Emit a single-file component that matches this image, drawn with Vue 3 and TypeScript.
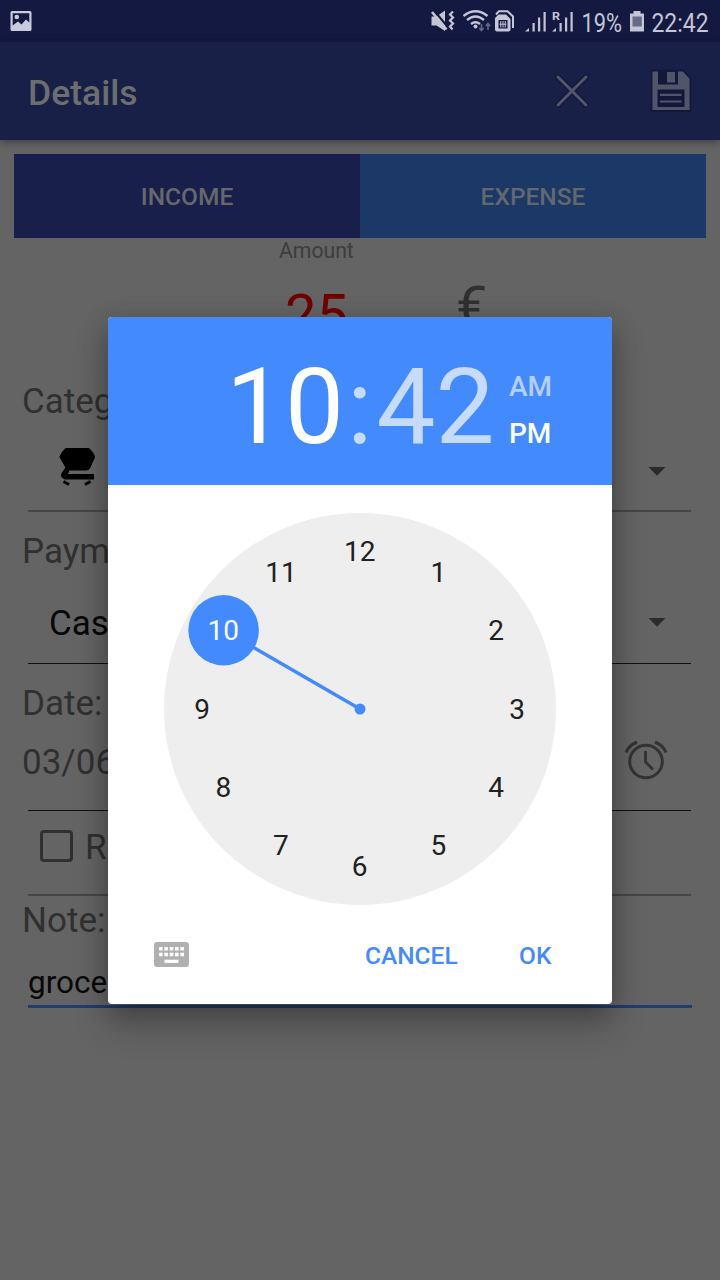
<script setup lang="ts">
interface Mark {
  label: string
  x: number
  y: number
  selected: boolean
}

const selectedHour = 10
const centre = 196
const markRadius = 157.5

const marks: Mark[] = Array.from({ length: 12 }, (_, i) => {
  const hour = i + 1
  const angle = (hour * Math.PI) / 6
  return {
    label: String(hour),
    x: centre + markRadius * Math.sin(angle),
    y: centre - markRadius * Math.cos(angle),
    selected: hour === selectedHour,
  }
})
const hand = marks.find((m) => m.selected)!
</script>

<template>
  <div class="screen">
    <header class="status">
      <svg class="picture" width="22" height="22" viewBox="0 0 22 22">
        <path fill="#c9cbdd" fill-rule="evenodd" d="M2 0H20Q21.500 0 21.500 1.500V18.500Q21.500 20 20 20H2Q.5 20 .5 18.500V1.500Q.5 0 2 0ZM2.700 2.300V14.500L8 10.500L11.500 13.500L16 8.500L19.300 11.500V2.300Z" />
        <circle cx="6.800" cy="6" r="2.300" fill="#c9cbdd" />
      </svg>
      <svg class="indicators" width="290" height="42" viewBox="430 0 290 42">
        <g fill="#c4c6d6">
          <path d="M431.500 16.500H436.500L445 10.500V31L436.500 25.500H431.500Z" />
          <path d="M434 10.500L449 28.500" fill="none" stroke="#131940" stroke-width="2" />
          <path d="M432 12L446.500 29.500" fill="none" stroke="#c4c6d6" stroke-width="2.600" />
          <path d="M453 11.500L450 14.500L453 17.500L450 20.500L453 23.500L450 26.500L452.500 29.500" fill="none" stroke="#c4c6d6" stroke-width="2.200" />
          <g fill="none" stroke="#c4c6d6" stroke-width="2.300">
            <path d="M463.500 16Q475.500 6.500 487.500 16" />
            <path d="M467 20Q475.500 13 484 20" />
            <path d="M471 24Q475.500 20.500 480 24" />
          </g>
          <circle cx="475.500" cy="26.500" r="2" />
          <path d="M481.500 24V30M479.300 28L481.500 30.500L483.700 28M488 30V24M485.800 26L488 23.500L490.200 26" fill="none" stroke="#63678a" stroke-width="1.600" />
          <path fill-rule="evenodd" d="M498.500 14.500H506L510.500 19V29.500Q510.500 31.500 508.500 31.500H497Q495 31.500 495 29.500V18ZM498.500 20V28.500H507.500V20Z" />
          <path d="M496 14.500L499 11.200H507.500L513 16.500V28" fill="none" stroke="#c4c6d6" stroke-width="2" />
          <path d="M500.800 21V27.500M503 21V27.500M505.200 21V27.500M499.500 24.200H506.500" fill="none" stroke="#c4c6d6" stroke-width="1" />
          <path d="M525 31.500L529 28V31.500ZM532.500 23H534.700V31.500H532.500ZM538 17.500H540.200V31.500H538ZM543.500 12H545.700V31.500H543.500Z" />
          <path d="M552 31.500L556 28V31.500ZM559.500 23H561.700V31.500H559.500ZM565 17.500H567.200V31.500H565ZM570.500 12H572.700V31.500H570.500Z" />
          <text x="552" y="20" font-size="11.500" font-weight="700" textLength="8" lengthAdjust="spacingAndGlyphs">R</text>
          <text x="581.500" y="31.500" font-size="26" textLength="40.500" lengthAdjust="spacingAndGlyphs">19%</text>
          <path d="M633.500 11H640.500V13.500H644V31.500H630V13.500H633.500Z" />
          <path d="M632.500 16.500H641.800V26.500H632.500Z" fill="#666b88" />
          <text x="651.500" y="31.500" font-size="26" textLength="57" lengthAdjust="spacingAndGlyphs">22:42</text>
        </g>
      </svg>
    </header>

    <nav class="appbar">
      <h1>Details</h1>
      <svg class="close" width="40" height="40" viewBox="0 0 40 40" fill="none" stroke-linecap="round">
        <path d="M6 6L34 34M34 6L6 34" stroke="#12183a" stroke-width="5.500" />
        <path d="M6 6L34 34M34 6L6 34" stroke="#535669" stroke-width="3" />
      </svg>
      <svg class="save" width="42" height="44" viewBox="0 0 42 44">
        <path d="M1.500 3Q1.500 1.500 3 1.500H33L40.500 9.500V40.500Q40.500 42 39 42H3Q1.500 42 1.500 40.500Z" fill="#51556a" stroke="#12183a" stroke-width="1.800" />
        <path d="M8 1.500H28V15.500H8Z" fill="#12183a" />
        <path d="M17 3H25V13.500H17Z" fill="#51556a" />
        <path d="M7.500 20.500H34.500V38H7.500Z" fill="#12183a" />
        <path d="M10 25.800H31.500M10 32.500H31.500" stroke="#51556a" stroke-width="2.200" />
      </svg>
    </nav>

    <main>
      <div class="tabs">
        <div class="tab income">INCOME</div>
        <div class="tab expense">EXPENSE</div>
      </div>
      <div class="amount-label">Amount</div>
      <div class="amount">
        <span class="value">25</span>
        <span class="currency">€</span>
      </div>

      <div class="label category">Category:</div>
      <div class="field spinner soft">
        <svg class="cart" width="38" height="40" viewBox="0 0 38 40">
          <path d="M7 .5H29.500Q34 4 35.500 9L30.500 20Q29.500 22 27 22H10L8 26.500H34.500V30.800H6Q1.500 29.500 3 25.500L7 19.500L1 9Q3 4 7 .5Z" fill="#000" stroke="#000" stroke-width="1.200" stroke-linejoin="round" />
          <path d="M4.500 33.500L10 36.500M31.500 33.500L26 36.500" stroke="#000" stroke-width="2.800" />
        </svg>
        <svg class="arrow" width="18" height="9" viewBox="0 0 18 9"><path d="M.5 0H17.500L9 8.700Z" fill="#2b2b2b" /></svg>
      </div>

      <div class="label payment">Payment:</div>
      <div class="field spinner">
        <span class="method">Cash</span>
        <svg class="arrow" width="18" height="9" viewBox="0 0 18 9"><path d="M.5 0H17.500L9 8.700Z" fill="#2b2b2b" /></svg>
      </div>

      <div class="label date">Date:</div>
      <div class="field datetime">
        <span>03/06/2018</span>
        <svg width="44" height="40" viewBox="0 0 44 40" fill="none" stroke="#333" stroke-width="3">
          <circle cx="22" cy="21.500" r="16.300" />
          <path d="M21.500 11V22L29 29.500" stroke-width="2.800" />
          <path d="M2 12.500Q5 5 13 2M42 12.500Q39 5 31 2" />
        </svg>
      </div>

      <div class="field repeat soft">
        <span class="box"></span>
        <span>Repeat</span>
      </div>

      <div class="label note">Note:</div>
      <div class="field entry">groceries</div>
    </main>

    <section class="dialog">
      <div class="head">
        <div class="time"><span class="hour">10</span><span class="colon">:</span><span>42</span></div>
        <div class="period">
          <span class="am">AM</span>
          <span>PM</span>
        </div>
      </div>
      <svg class="clock" width="392" height="392" viewBox="0 0 392 392">
        <circle :cx="centre" :cy="centre" r="196" fill="#eee" />
        <line :x1="centre" :y1="centre" :x2="hand.x" :y2="hand.y" stroke="#448aff" stroke-width="3.500" />
        <circle :cx="centre" :cy="centre" r="5.500" fill="#448aff" />
        <circle :cx="hand.x" :cy="hand.y" r="35.300" fill="#448aff" />
        <text
          v-for="m in marks"
          :key="m.label"
          :x="m.x - 0.3"
          :y="m.y + 9.600"
          :fill="m.selected ? '#fff' : '#212121'"
          font-size="28"
          text-anchor="middle"
        >{{ m.label }}</text>
      </svg>
      <div class="actions">
        <svg width="35" height="25" viewBox="0 0 35 25">
          <rect width="35" height="25" rx="3.200" fill="#b0b0b0" />
          <path d="M5 6.700H30M5 12.500H30" stroke="#fff" stroke-width="3.500" stroke-dasharray="3.600 1.750" />
          <path d="M10.500 19.300H24.500" stroke="#fff" stroke-width="3.200" />
        </svg>
        <span class="cancel">CANCEL</span>
        <span class="ok">OK</span>
      </div>
    </section>
  </div>
</template>

<style>
body {
  margin: 0;
  background: #646464;
}
</style>

<style scoped>
.screen {
  position: relative;
  width: 720px;
  height: 1280px;
  overflow: hidden;
  background: #646464;
  font-family: Roboto, sans-serif;
  color: #303030;
}
.status {
  height: 42px;
  display: flex;
  justify-content: space-between;
  background: #131940;
}
.picture {
  margin: 11px 0 0 10px;
}
.appbar {
  height: 98px;
  display: flex;
  align-items: center;
  padding: 0 28px 0 28px;
  box-sizing: border-box;
  background: #192047;
  box-shadow: 0 2px 8px rgba(0, 0, 0, 0.4);
}
h1 {
  margin: 3px auto 0 0;
  font-size: 35.500px;
  line-height: 40px;
  font-weight: 500;
  color: #6d6e70;
}
.close {
  margin-right: 58px;
}
main {
  padding-top: 14px;
}
.tabs {
  display: flex;
  height: 84px;
  margin: 0 14px;
}
.tab {
  flex: 1;
  text-align: center;
  line-height: 86px;
  font-size: 24.500px;
  font-weight: 500;
}
.income {
  background: #191f4b;
  color: #66686c;
}
.expense {
  background: #1b3866;
  color: #63686f;
}
.amount-label {
  height: 25px;
  line-height: 26px;
  padding-left: 279px;
  font-size: 21.200px;
  color: #3d3d3d;
}
.amount {
  display: flex;
  height: 102px;
  line-height: 104px;
  padding-left: 285px;
  font-size: 56px;
}
.value {
  width: 171px;
  color: #700000;
}
.currency {
  line-height: 88px;
}
.label {
  padding-left: 22px;
  font-size: 35px;
}
.category {
  height: 72px;
  line-height: 73px;
}
.payment,
.date {
  height: 78px;
  line-height: 79px;
}
.note {
  height: 48px;
  line-height: 49px;
}
.field {
  display: flex;
  align-items: center;
  box-sizing: border-box;
  margin: 0 29px 0 28px;
  font-size: 35px;
  border-bottom: 1px solid #111;
}
.field.soft {
  border-bottom: 2px solid #464646;
}
.spinner {
  justify-content: space-between;
  height: 74px;
  padding: 0 25px 8px 21px;
  color: #080808;
}
.method {
  margin-top: 2px;
}
.spinner.soft {
  height: 75px;
  padding: 0 25px 5px 31px;
}
.cart {
  margin-top: -7px;
}
.datetime {
  justify-content: space-between;
  height: 69px;
  padding: 0 23px 29px 0;
}
.datetime span {
  margin: 2px 0 0 -6px;
}
.datetime svg {
  margin-top: -3px;
}
.repeat {
  height: 85px;
  padding: 0 0 14px 12px;
  gap: 12px;
}
.repeat span:last-child {
  margin-top: 3px;
}
.box {
  box-sizing: border-box;
  width: 33px;
  height: 32px;
  border: 3.500px solid #303030;
  border-radius: 4px;
}
.entry {
  height: 64px;
  margin-right: 28px;
  font-size: 31.500px;
  line-height: 78px;
  align-items: flex-start;
  color: #080808;
  border-bottom: 3px solid #1f3d70;
}
.dialog {
  position: absolute;
  left: 108px;
  top: 317px;
  width: 504px;
  height: 687px;
  border-radius: 4px;
  background: #fff;
  box-shadow: 0 20px 34px rgba(0, 0, 0, 0.26), 0 4px 26px rgba(0, 0, 0, 0.18);
}
.head {
  display: flex;
  height: 168px;
  background: #448aff;
  border-radius: 4px 4px 0 0;
  box-sizing: border-box;
  padding-left: 118px;
  color: #fff;
}
.time {
  width: 283px;
  font-size: 105px;
  line-height: 182px;
  color: #c7dbff;
  white-space: nowrap;
}
.hour {
  color: #fff;
}
.colon {
  margin: 0 4px 0 3px;
}
.period {
  display: flex;
  flex-direction: column;
  padding-top: 46px;
  font-size: 28px;
  line-height: 47px;
  font-weight: 500;
}
.am {
  color: #b4d0ff;
}
.clock {
  display: block;
  margin: 28px auto 0;
}
.actions {
  display: flex;
  align-items: center;
  height: 99px;
  padding-left: 46px;
  font-size: 24.500px;
  font-weight: 500;
  color: #448aff;
}
.cancel {
  margin-left: 176px;
  width: 154px;
}
.cancel,
.ok {
  margin-top: 2px;
}
text {
  font-family: Roboto, sans-serif;
}
</style>
